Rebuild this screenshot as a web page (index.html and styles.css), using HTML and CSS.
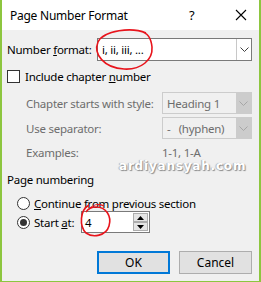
FILE: index.html
```html
<!DOCTYPE html>
<html>
<head lang="en">
    <meta charset="UTF-8">
    <title>Page Number Format</title>
    <link rel="stylesheet" href="styles.css">
</head>
<body>
<div id="dialog">
    <div class="title_bar">
        <span class="title">Page Number Format</span>
        <span class="help">?</span>
        <span class="close">
            <svg width="12" height="12" viewBox="0 0 12 12"><path d="M1 1L11 11M11 1L1 11" stroke="#000" stroke-width="1.1"/></svg>
        </span>
    </div>
    <div class="content">
        <div class="row row_format">
            <label class="label label_format">Number <u>f</u>ormat:</label>
            <div class="combo combo_format">
                <span class="combo_text">i, ii, iii, ...</span>
                <span class="combo_btn"><svg width="9" height="5" viewBox="0 0 9 5"><path d="M0.5 0.5L4.5 4.5L8.5 0.5" fill="none" stroke="#404040"/></svg></span>
            </div>
        </div>

        <div class="row row_check">
            <span class="checkbox"></span>
            <span>Include chapter <u>n</u>umber</span>
        </div>

        <div class="row row_sub row_style">
            <span class="label_sub">Chapter starts with style:</span>
            <div class="combo combo_off">
                <span class="combo_text">Heading 1</span>
                <span class="combo_btn"><svg width="9" height="5" viewBox="0 0 9 5"><path d="M0.5 0.5L4.5 4.5L8.5 0.5" fill="none" stroke="#a6a6a6"/></svg></span>
            </div>
        </div>
        <div class="row row_sub row_sep">
            <span class="label_sub">Use separator:</span>
            <div class="combo combo_off">
                <span class="combo_text">-&nbsp;&nbsp;&nbsp;(hyphen)</span>
                <span class="combo_btn"><svg width="9" height="5" viewBox="0 0 9 5"><path d="M0.5 0.5L4.5 4.5L8.5 0.5" fill="none" stroke="#a6a6a6"/></svg></span>
            </div>
        </div>
        <div class="row row_sub row_examples">
            <span class="label_sub">Examples:</span>
            <span class="examples">1-1, 1-A</span>
        </div>

        <div class="group_title">Page numbering</div>

        <div class="row row_radio row_continue">
            <span class="radio"></span>
            <span><u>C</u>ontinue from previous section</span>
        </div>
        <div class="row row_radio row_start">
            <span class="radio radio_on"></span>
            <span class="start_label">Start <u>a</u>t:</span>
            <div class="spinner">
                <span class="spin_text">4</span>
                <span class="spin_btns">
                    <span class="spin_btn"><svg width="7" height="4" viewBox="0 0 7 4"><path d="M0 4L3.5 0L7 4Z" fill="#000"/></svg></span>
                    <span class="spin_btn"><svg width="7" height="4" viewBox="0 0 7 4"><path d="M0 0L3.5 4L7 0Z" fill="#000"/></svg></span>
                </span>
            </div>
        </div>

        <div class="buttons">
            <button class="btn btn_ok">OK</button>
            <button class="btn">Cancel</button>
        </div>
    </div>

    <div class="watermark">ardiyansyah.com</div>

    <svg class="marks" width="261" height="282" viewBox="0 0 261 282">
        <path d="M146 33C132 27 104 30 98 42C93 54 104 68 124 69C141 70 153 60 152 47C151 38 148 33 140 31" fill="none" stroke="#e8141c" stroke-width="1.6"/>
        <path d="M89 205C80 210 79 226 86 233C93 238 106 236 109 226C112 216 106 207 96 207C92 207 88 209 86 212" fill="none" stroke="#e8141c" stroke-width="1.6"/>
        <path d="M88 210C92 205 98 203 104 206" fill="none" stroke="#e8141c" stroke-width="1.2"/>
    </svg>
</div>
</body>
</html>
```

FILE: styles.css
```css
body,div,ul,li,p{ margin:0; padding:0;}

body{
    font-family: "Segoe UI", "Noto Sans", sans-serif;
    font-size: 11.5px;
    letter-spacing: -0.25px;
    color: #000000;
    background-color: #ffffff;
    white-space: nowrap;
}

#dialog{
    position: relative;
    width: 257px;
    height: 281px;
    border-left: 2px solid #8dc63f;
    border-right: 2px solid #8dc63f;
    border-bottom: 1px solid #8dc63f;
    background-color: #f0f0f0;
    overflow: hidden;
}

.title_bar{
    height: 30px;
    display: flex;
    align-items: center;
    background-color: #ffffff;
    padding-left: 8px;
}
.title{
    flex: 1;
    font-size: 12px;
}
.help{
    width: 46px;
    font-size: 13px;
}
.close{
    width: 24px;
    display: flex;
    align-items: center;
}

.content{
    padding: 8px 7px 0 5px;
}

.row{
    display: flex;
    align-items: center;
}
.row > span,
.row > label{
    flex-shrink: 0;
}
.row_format{
    height: 23px;
}
.label_format{
    width: 90px;
}
.combo{
    flex: 1;
    height: 23px;
    box-sizing: border-box;
    border: 1px solid #7a7a7a;
    background-color: #ffffff;
    display: flex;
    align-items: center;
}
.combo_text{
    flex: 1;
    padding-left: 4px;
}
.combo_btn{
    width: 15px;
    height: 100%;
    box-sizing: border-box;
    border-left: 1px solid #b9b9b9;
    background-color: #f0f0f0;
    display: flex;
    align-items: center;
    justify-content: center;
}
.combo_format .combo_btn{
    background-color: #ffffff;
    border-left-color: #c8c8c8;
}

.row_check{
    margin-top: 9px;
    height: 13px;
}
.checkbox{
    width: 13px;
    height: 13px;
    box-sizing: border-box;
    border: 1px solid #333333;
    background-color: #ffffff;
    margin-right: 5px;
}

.row_sub{
    padding-left: 19px;
    color: #6d6d6d;
}
.label_sub{
    width: 136px;
}
.row_style{
    margin-top: 9px;
    height: 22px;
}
.row_sep{
    margin-top: 3px;
    height: 22px;
}
.combo_off{
    height: 22px;
    border-color: #cccccc;
    background-color: #f0f0f0;
}
.combo_off .combo_text{
    color: #6d6d6d;
}
.combo_off .combo_btn{
    background-color: #cccccc;
    border-left: 0;
}
.row_examples{
    margin-top: 5px;
    height: 16px;
}

.group_title{
    margin-top: 12px;
    height: 16px;
    line-height: 16px;
}

.row_radio{
    padding-left: 10px;
}
.radio{
    width: 13px;
    height: 13px;
    box-sizing: border-box;
    border: 1px solid #333333;
    border-radius: 50%;
    background-color: #ffffff;
    margin-right: 4px;
    display: flex;
    align-items: center;
    justify-content: center;
}
.radio_on::after{
    content: "";
    width: 7px;
    height: 7px;
    border-radius: 50%;
    background-color: #333333;
}
.row_continue{
    margin-top: 7px;
    height: 16px;
}
.row_start{
    margin-top: 0;
    height: 22px;
}
.start_label{
    width: 47px;
}
.spinner{
    width: 69px;
    height: 22px;
    box-sizing: border-box;
    border: 1px solid #7a7a7a;
    background-color: #ffffff;
    display: flex;
    align-items: center;
}
.spin_text{
    flex: 1;
    padding-left: 3px;
}
.spin_btns{
    width: 16px;
    height: 100%;
    display: flex;
    flex-direction: column;
    padding: 1px 1px 1px 0;
    box-sizing: border-box;
}
.spin_btn{
    flex: 1;
    border: 1px solid #adadad;
    background-color: #e5e5e5;
    display: flex;
    align-items: center;
    justify-content: center;
}

.buttons{
    margin-top: 18px;
    display: flex;
    justify-content: flex-end;
    gap: 9px;
}
.btn{
    width: 73px;
    height: 23px;
    box-sizing: border-box;
    border: 1px solid #adadad;
    background-color: #e1e1e1;
    font-family: "Segoe UI", "Noto Sans", sans-serif;
    font-size: 12px;
    color: #000000;
    padding: 0;
}
.btn_ok{
    border: 2px solid #0078d7;
}

.watermark{
    position: absolute;
    left: 117px;
    top: 159px;
    font-family: "DejaVu Sans", sans-serif;
    font-size: 12px;
    font-weight: bold;
    letter-spacing: 0.8px;
    color: #ffffff;
    text-shadow: 1px 1px 1px #8a8a8a, -1px 0 1px #b0b0b0;
}

.marks{
    position: absolute;
    left: -2px;
    top: 0;
    pointer-events: none;
}
```
